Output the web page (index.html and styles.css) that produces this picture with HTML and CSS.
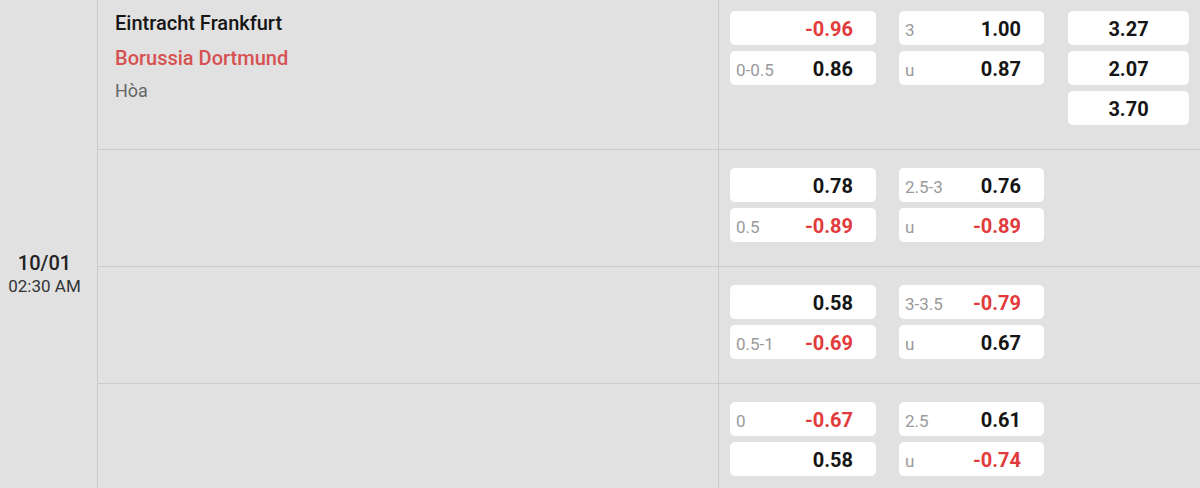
FILE: index.html
```html
<!DOCTYPE html>
<html lang="vi">
<head>
<meta charset="utf-8">
<title>Odds</title>
<link rel="stylesheet" href="styles.css">
</head>
<body>
<div class="match">
  <div class="date-col">
    <div class="date">10/01</div>
    <div class="time">02:30 AM</div>
  </div>
  <div class="rows">
    <div class="row row-first">
      <div class="teams">
        <div class="team home">Eintracht Frankfurt</div>
        <div class="team away">Borussia Dortmund</div>
        <div class="team draw">Hòa</div>
      </div>
      <div class="odds">
        <div class="col">
          <div class="cell"><span class="lbl"></span><span class="val neg">-0.96</span></div>
          <div class="cell"><span class="lbl">0-0.5</span><span class="val">0.86</span></div>
        </div>
        <div class="col">
          <div class="cell"><span class="lbl">3</span><span class="val">1.00</span></div>
          <div class="cell"><span class="lbl">u</span><span class="val">0.87</span></div>
        </div>
        <div class="col col-x">
          <div class="cell center"><span class="val">3.27</span></div>
          <div class="cell center"><span class="val">2.07</span></div>
          <div class="cell center"><span class="val">3.70</span></div>
        </div>
      </div>
    </div>
    <div class="row">
      <div class="teams"></div>
      <div class="odds">
        <div class="col">
          <div class="cell"><span class="lbl"></span><span class="val">0.78</span></div>
          <div class="cell"><span class="lbl">0.5</span><span class="val neg">-0.89</span></div>
        </div>
        <div class="col">
          <div class="cell"><span class="lbl">2.5-3</span><span class="val">0.76</span></div>
          <div class="cell"><span class="lbl">u</span><span class="val neg">-0.89</span></div>
        </div>
      </div>
    </div>
    <div class="row">
      <div class="teams"></div>
      <div class="odds">
        <div class="col">
          <div class="cell"><span class="lbl"></span><span class="val">0.58</span></div>
          <div class="cell"><span class="lbl">0.5-1</span><span class="val neg">-0.69</span></div>
        </div>
        <div class="col">
          <div class="cell"><span class="lbl">3-3.5</span><span class="val neg">-0.79</span></div>
          <div class="cell"><span class="lbl">u</span><span class="val">0.67</span></div>
        </div>
      </div>
    </div>
    <div class="row row-last">
      <div class="teams"></div>
      <div class="odds">
        <div class="col">
          <div class="cell"><span class="lbl">0</span><span class="val neg">-0.67</span></div>
          <div class="cell"><span class="lbl"></span><span class="val">0.58</span></div>
        </div>
        <div class="col">
          <div class="cell"><span class="lbl">2.5</span><span class="val">0.61</span></div>
          <div class="cell"><span class="lbl">u</span><span class="val neg">-0.74</span></div>
        </div>
      </div>
    </div>
  </div>
</div>
</body>
</html>
```
FILE: styles.css
```css
* { box-sizing: border-box; }
html, body {
  margin: 0;
  padding: 0;
  background: #e1e1e1;
  font-family: Roboto, "Liberation Sans", Arial, sans-serif;
  color: #111;
}
.match {
  display: flex;
  min-height: 520px;
  background: #e1e1e1;
}
.date-col {
  width: 98px;
  padding-right: 8px;
  padding-top: 250px;
  border-right: 1px solid #cbcbcb;
  text-align: center;
}
.date {
  font-size: 20px;
  font-weight: 500;
  line-height: 26px;
  color: #222;
}
.time {
  font-size: 17px;
  line-height: 20px;
  color: #333;
}
.rows {
  flex: 1;
  display: flex;
  flex-direction: column;
}
.row {
  display: flex;
  border-bottom: 1px solid #cbcbcb;
}
.row-last { border-bottom: none; flex: 1; }
.teams {
  width: 621px;
  border-right: 1px solid #cbcbcb;
  padding: 11px 0 0 17px;
}
.team {
  font-size: 20px;
  line-height: 24px;
}
.home { font-weight: 500; color: #161616; }
.away { font-weight: 500; color: #d65252; margin-top: 11px; }
.draw { font-size: 18px; color: #666; margin-top: 9px; }
.odds {
  display: flex;
  padding: 18px 0 24px 11px;
}
.row-first .odds { padding-top: 11px; padding-bottom: 24px; }
.col {
  display: flex;
  flex-direction: column;
  gap: 6px;
  width: 146px;
  margin-right: 23px;
}
.col + .col { width: 145px; margin-right: 24px; }
.col.col-x { width: 121px; margin-right: 0; }
.cell {
  height: 34px;
  background: #fff;
  border-radius: 5px;
  display: flex;
  align-items: baseline;
  justify-content: space-between;
  padding: 6px 23px 0 6px;
}
.cell.center { justify-content: center; padding: 6px 0 0; }
.lbl {
  font-size: 17px;
  line-height: 24px;
  color: #9a9a9a;
}
.val {
  font-size: 20px;
  line-height: 24px;
  font-weight: 700;
  color: #151515;
}
.val.neg { color: #e23b3b; }
```
